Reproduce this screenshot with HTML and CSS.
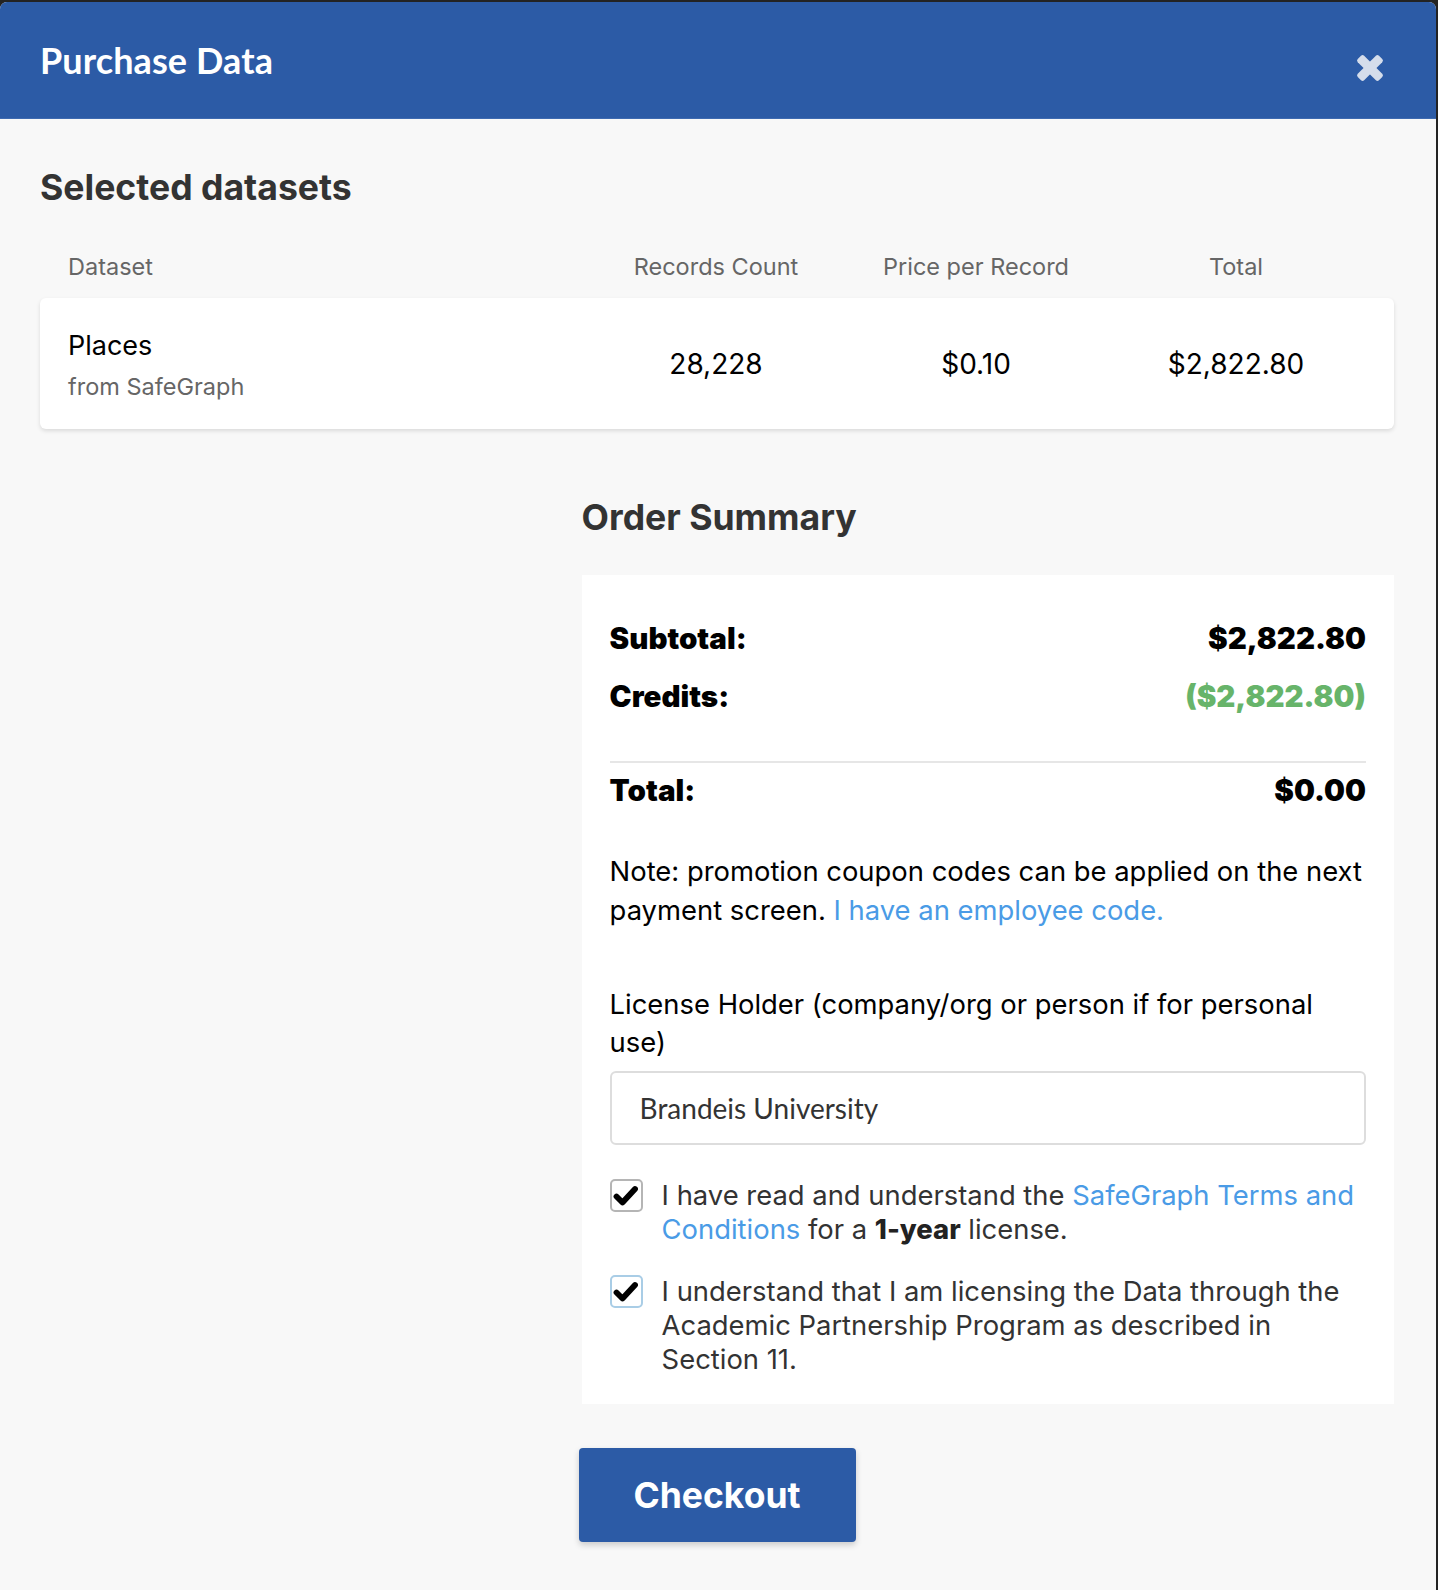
FILE: index.html
```html
<!DOCTYPE html>
<html lang="en">
<head>
<meta charset="utf-8">
<title>Purchase Data</title>
<link rel="stylesheet" href="styles.css">
</head>
<body>
<div class="modal">
  <header class="modal-header">
    <h1 class="modal-title">Purchase Data</h1>
    <button class="close-btn" aria-label="Close">
      <svg width="28" height="28" viewBox="0 0 28 28">
        <g transform="translate(14 14)" fill="currentColor">
          <rect x="-15" y="-4.5" width="30" height="9" rx="2.2" transform="rotate(45)"/>
          <rect x="-15" y="-4.5" width="30" height="9" rx="2.2" transform="rotate(-45)"/>
        </g>
      </svg>
    </button>
  </header>

  <main class="modal-body">
    <h2 class="section-title">Selected datasets</h2>

    <div class="datasets">
      <div class="ds-grid ds-head">
        <div class="cell-left">Dataset</div>
        <div class="cell-center">Records Count</div>
        <div class="cell-center">Price per Record</div>
        <div class="cell-center">Total</div>
      </div>
      <div class="ds-grid ds-row">
        <div class="cell-left ds-info">
          <div class="ds-name">Places</div>
          <div class="ds-source">from SafeGraph</div>
        </div>
        <div class="cell-center ds-value">28,228</div>
        <div class="cell-center ds-value">$0.10</div>
        <div class="cell-center ds-value">$2,822.80</div>
      </div>
    </div>

    <section class="summary">
      <h2 class="section-title summary-title">Order Summary</h2>
      <div class="summary-card">
        <div class="sum-row">
          <span>Subtotal:</span><span>$2,822.80</span>
        </div>
        <div class="sum-row sum-row-2">
          <span>Credits:</span><span class="credit">($2,822.80)</span>
        </div>
        <hr class="sum-divider">
        <div class="sum-row sum-total">
          <span>Total:</span><span>$0.00</span>
        </div>

        <p class="note">Note: promotion coupon codes can be applied on the next payment screen. <a href="#" class="link">I have an employee code.</a></p>

        <label class="field-label" for="holder">License Holder (company/org or person if for personal use)</label>
        <div class="text-input" id="holder">Brandeis University</div>

        <div class="check-row check-row-1">
          <span class="checkbox">
            <svg width="26" height="24" viewBox="0 0 26 24"><path d="M3.5 12.5 L9.5 18.5 L22 5" fill="none" stroke="#000" stroke-width="5.8" stroke-linecap="round" stroke-linejoin="round"/></svg>
          </span>
          <span class="check-text">I have read and understand the <a href="#" class="link">SafeGraph Terms and Conditions</a> for a <strong>1-year</strong> license.</span>
        </div>
        <div class="check-row check-row-2">
          <span class="checkbox checkbox-focus">
            <svg width="26" height="24" viewBox="0 0 26 24"><path d="M3.5 12.5 L9.5 18.5 L22 5" fill="none" stroke="#000" stroke-width="5.8" stroke-linecap="round" stroke-linejoin="round"/></svg>
          </span>
          <span class="check-text">I understand that I am licensing the Data through the Academic Partnership Program as described in Section 11.</span>
        </div>
      </div>
    </section>

    <div class="actions">
      <button class="checkout-btn">Checkout</button>
    </div>
  </main>
</div>
</body>
</html>
```
FILE: styles.css
```css
* { box-sizing: border-box; }

html, body {
  margin: 0;
  padding: 0;
}

body {
  background: #232323;
  font-family: Inter, "Noto Sans", sans-serif;
  color: #000;
  min-height: 1590px;
}

.modal {
  margin: 2px 2px 0 0;
  min-height: 1588px;
  background: #f8f8f8;
  border-radius: 7px 7px 0 0;
  overflow: hidden;
}

.modal-header {
  height: 117px;
  background: #2c5ba6;
  display: flex;
  align-items: center;
  justify-content: space-between;
  padding: 0 40px 0 40px;
  border-bottom: 1px solid #3e6ab0;
}

.modal-title {
  margin: 0;
  font-family: Lato, sans-serif;
  font-weight: 700;
  font-size: 36px;
  color: #fff;
  letter-spacing: 0.1px;
}

.close-btn {
  background: none;
  border: 0;
  padding: 0;
  margin: 16px 12px 0 0;
  color: #d5ddeb;
  display: flex;
  cursor: pointer;
}

.modal-body {
  padding: 0 42px 0 40px;
}

.section-title {
  margin: 0;
  font-weight: 700;
  font-size: 35.6px;
  color: #333;
  line-height: 44px;
}

.modal-body > .section-title {
  padding-top: 47px;
}

.datasets {
  margin-top: 36px;
}

.ds-grid {
  display: grid;
  grid-template-columns: 1fr 260px 260px 260px;
  padding: 0 28px;
  align-items: center;
}

.ds-head {
  font-size: 23.5px;
  color: #666;
  height: 40px;
}

.cell-center { text-align: center; }

.ds-row {
  margin-top: 12px;
  height: 131px;
  background: #fff;
  border-radius: 6px;
  box-shadow: 0 2px 4px rgba(0, 0, 0, 0.12);
}

.ds-info {
  padding-top: 4px;
}

.ds-name {
  font-size: 27px;
  line-height: 34px;
  color: #000;
}

.ds-source {
  margin-top: 8px;
  font-size: 23.5px;
  line-height: 32px;
  color: #666;
}

.ds-value {
  font-size: 28px;
  color: #000;
}

.summary {
  margin-left: 40%;
  margin-top: 67px;
}

.summary-title {
  line-height: 44px;
}

.summary-card {
  margin-top: 35px;
  background: #fff;
  padding: 40px 28px 28px 28px;
}

.sum-row {
  display: flex;
  justify-content: space-between;
  font-size: 29.5px;
  font-weight: 900;
  line-height: 46px;
  color: #000;
}

.sum-row-2 { margin-top: 12px; }

.credit { color: #67b46a; }

.sum-divider {
  border: 0;
  height: 2px;
  background: #e6e6e6;
  margin: 42px 0 4px 0;
}

.note {
  margin: 39px 0 0 0;
  font-size: 27.4px;
  line-height: 39px;
  color: #000;
}

.link {
  color: #4a9be6;
  text-decoration: none;
}

.field-label {
  display: block;
  margin-top: 55px;
  font-size: 27.4px;
  line-height: 38px;
  color: #000;
}

.text-input {
  margin-top: 10px;
  height: 74px;
  border: 2px solid #ddd;
  border-radius: 6px;
  display: flex;
  align-items: center;
  padding: 0 28px;
  font-family: Lato, sans-serif;
  font-size: 28px;
  color: #333;
}

.check-row {
  display: flex;
  align-items: flex-start;
  gap: 19px;
}

.check-row-1 { margin-top: 33px; }
.check-row-2 { margin-top: 28px; }

.checkbox {
  flex: 0 0 33px;
  width: 33px;
  height: 33px;
  border: 2px solid #b5b5b5;
  border-radius: 5px;
  background: #fff;
  display: flex;
  align-items: center;
  justify-content: center;
  margin-top: 1px;
}

.checkbox-focus {
  border-color: #a9cde6;
}

.check-text {
  font-size: 27.4px;
  line-height: 34px;
  color: #333;
}

.check-text strong {
  font-weight: 800;
  color: #222;
}

.actions {
  display: flex;
  justify-content: center;
  margin-top: 44px;
  padding-bottom: 40px;
}

.checkout-btn {
  width: 277px;
  height: 94px;
  background: #2c5ba6;
  color: #fff;
  border: 0;
  border-radius: 4px;
  font-family: Inter, sans-serif;
  font-weight: 700;
  font-size: 35.5px;
  box-shadow: 0 3px 6px rgba(0, 0, 0, 0.18);
  cursor: pointer;
}
```
